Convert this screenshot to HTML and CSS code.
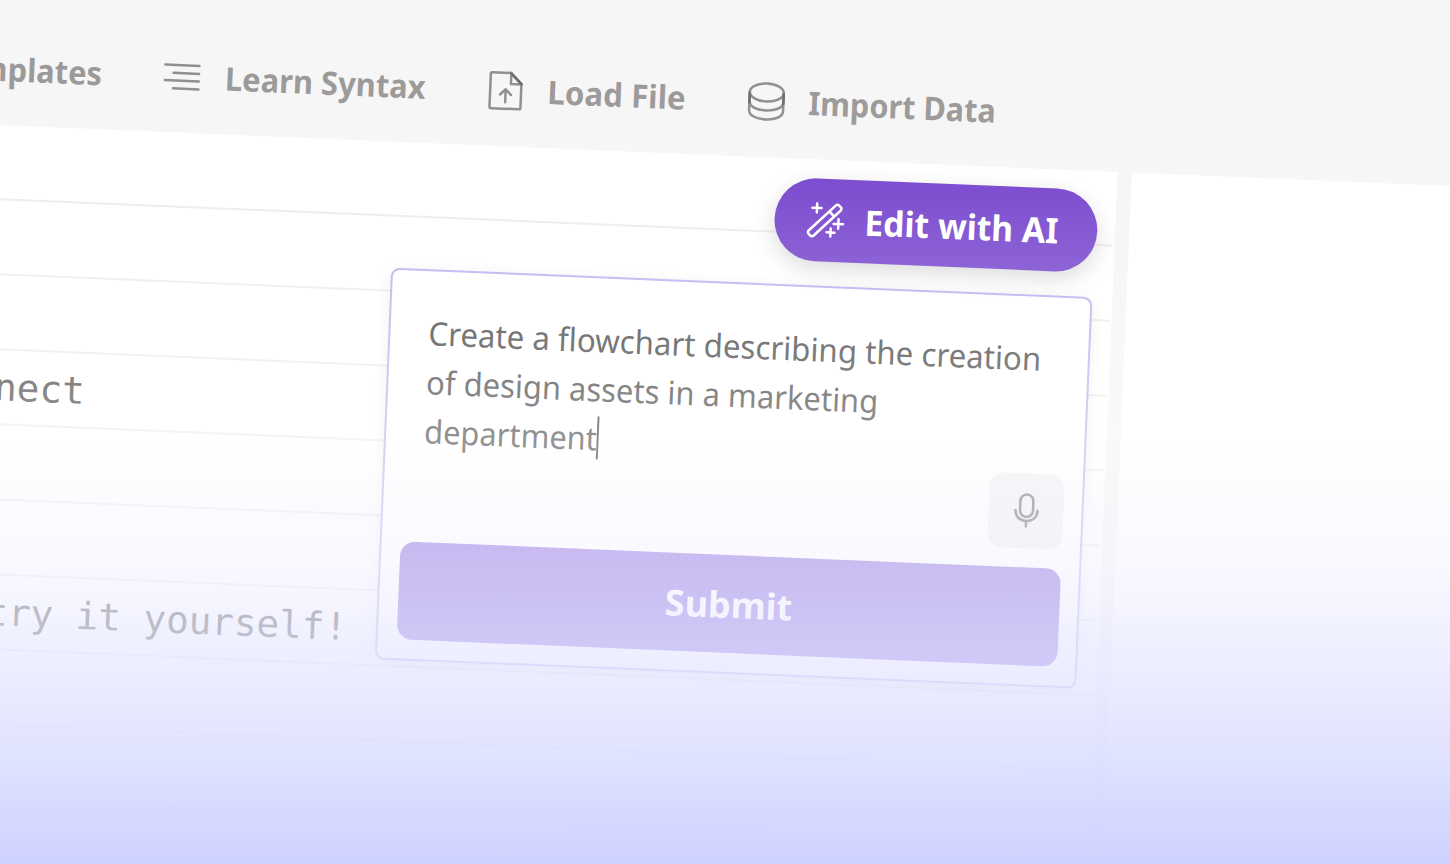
FILE: index.html
```html
<!DOCTYPE html>
<html lang="en">
<head>
<meta charset="utf-8">
<title>Edit with AI</title>
<link rel="stylesheet" href="styles.css">
</head>
<body>
<div class="viewport">
<div class="stage">
  <nav class="toolbar">
    <div class="tool tool-first"><span class="label w-templates">Templates</span></div>
    <div class="tool">
      <svg class="icon" viewBox="0 0 38 38"><path d="M2 7.500H36M10.500 15.500H36M2 23H36M10.500 31H36"/></svg>
      <span class="label w-learn">Learn Syntax</span>
    </div>
    <div class="tool">
      <svg class="icon" viewBox="0 0 38 38"><path d="M6 1.500H25L35.500 12V36Q35.500 37.500 34 37.500H6Q4.500 37.500 4.500 36V3Q4.500 1.500 6 1.500Z"/><path d="M25 1.500V12.500H35.500M20 31V19M14.500 23.500L20 18L25.500 23.500"/><path class="dark" d="M25 2L35.500 12.500"/></svg>
      <span class="label w-load">Load File</span>
    </div>
    <div class="tool">
      <svg class="icon" viewBox="0 0 38 38"><ellipse cx="20" cy="10.300" rx="17" ry="9"/><path d="M3 10.300V28.500C3 40.200 37 40.200 37 28.500V10.300M3 19.500C3 31.200 37 31.200 37 19.500"/><path class="dark" d="M3 11.500V21M37 11.500V21"/></svg>
      <span class="label w-import">Import Data</span>
    </div>
  </nav>
  <main class="workspace">
    <section class="editor">
      <div class="row"></div>
      <div class="row"></div>
      <div class="row"></div>
      <div class="row"><span class="code code-a">Connect</span></div>
      <div class="row"></div>
      <div class="row"></div>
      <div class="row"><span class="code code-b">try it yourself!</span></div>
      <div class="row"></div>
      <div class="row"></div>
      <div class="assistant">
        <div class="pill">
          <svg class="wand" viewBox="0 0 38 38"><path d="M2.800 30.200L28.600 4.400Q30.400 2.600 32.200 4.400L33.600 5.800Q35.400 7.600 33.600 9.400L7.800 35.200Q6 37 4.200 35.200L2.800 33.800Q1 32 2.800 30.200ZM22.500 10.500L27.500 15.500"/><path d="M10 3V12M5.500 7.500H14.500M32 18V27.500M27.200 22.800H36.700M24.500 27.500V35.500M20.500 31.500H28.500"/></svg>
          <span class="pill-text">Edit with AI</span>
        </div>
        <div class="card">
          <div class="prompt">
            <div class="line l1">Create a flowchart describing the creation</div>
            <div class="line l2">of design assets in a marketing</div>
            <div class="line l3">department<span class="caret"></span></div>
          </div>
          <div class="mic">
            <svg viewBox="0 0 26 36"><rect x="6.500" y="2" width="13" height="22.500" rx="6.500"/><path d="M2 18C2 24.500 6.500 28.500 13 28.500S24 24.500 24 18M13 28.500V34"/></svg>
          </div>
          <div class="submit"><span>Submit</span></div>
        </div>
      </div>
    </section>
    <div class="divider"></div>
    <section class="preview"></section>
  </main>
</div>
<div class="fade"></div>
</div>
</body>
</html>
```
FILE: styles.css
```css
body { margin: 0; background: #f5f5f5; font-family: "Noto Sans", "Open Sans", sans-serif; }
.viewport { position: relative; width: 1450px; height: 864px; overflow: hidden; }
.stage { width: 1600px; height: 1100px; margin-top: -100px; transform-origin: 0 100px; transform: rotate(2.4deg); }
.toolbar { box-sizing: border-box; height: 225px; padding-top: 112px; margin-left: -95px; display: flex; align-items: center; gap: 60.500px; background: #f6f6f6; color: #999696; }
.tool { display: flex; align-items: center; gap: 24px; height: 111px; }
.tool-first { width: 200px; justify-content: flex-end; }
.label { font-size: 32.500px; font-weight: 700; white-space: nowrap; transform-origin: 0 50%; }
.w-templates { transform: scaleX(.95); transform-origin: 100% 50%; }
.w-learn { width: 201px; transform: scaleX(.952); }
.w-load { width: 138px; transform: scaleX(.962); }
.w-import { width: 187px; transform: scaleX(.942); }
.icon { width: 38px; height: 38px; fill: none; stroke: #8f8b8b; stroke-width: 2.500; stroke-linecap: round; stroke-linejoin: round; overflow: visible; }
.dark { stroke: #6a6767; }
.workspace { display: flex; height: 875px; }
.editor { position: relative; width: 1124px; background: #fff; }
.row { box-sizing: border-box; width: 1122px; height: 75px; border-bottom: 2.400px solid #ececec; display: flex; align-items: center; }
.code { font-family: "DejaVu Sans Mono", monospace; font-size: 37.600px; line-height: 60px; padding-top: 1px; color: #484848; text-align: right; white-space: nowrap; display: flex; justify-content: flex-end; }
.code-a { width: 101px; }
.code-b { width: 373px; }
.divider { width: 14px; background: #f5f5f5; }
.preview { flex: 1; background: #fff; }
.assistant { position: absolute; top: 19px; right: 20.500px; width: 702px; display: flex; flex-direction: column; align-items: flex-end; gap: 23.500px; isolation: isolate; }
.pill { box-sizing: border-box; width: 323px; height: 83px; margin-right: -2px; border-radius: 42px; padding-left: 32px; display: flex; align-items: center; gap: 20px; background: #7340cc; color: #fff; box-shadow: 0 8px 22px rgba(0, 0, 0, .16); }
.wand { width: 38px; height: 38px; margin-top: -1px; fill: none; stroke: #fff; stroke-width: 2.500; stroke-linecap: round; stroke-linejoin: round; }
.pill-text { font-size: 35px; font-weight: 700; white-space: nowrap; transform: scaleX(.962); transform-origin: 0 50%; }
.card { position: relative; z-index: -1; box-sizing: border-box; width: 100%; height: 392.500px; border: 2.600px solid #b9aef0; border-radius: 9px; padding: 0 17.500px 19px 19px; display: flex; flex-direction: column; background: #fff; box-shadow: 0 3px 14px rgba(0, 0, 0, .08); }
.prompt { padding: 37.500px 0 0 19.500px; height: 139.500px; color: #454545; font-size: 32.500px; }
.line { height: 49.200px; line-height: 49.200px; white-space: nowrap; display: flex; align-items: center; width: max-content; transform-origin: 0 50%; }
.l1 { transform: scaleX(.961); }
.l2 { transform: scaleX(.952); }
.l3 { transform: scaleX(.948); }
.caret { width: 2.200px; height: 43px; margin-left: -0.500px; background: #333; }
.mic { align-self: flex-end; width: 75px; height: 75px; border-radius: 14px; background: #f2eef0; display: flex; align-items: center; justify-content: center; }
.mic svg { width: 26px; height: 36px; margin-top: -1px; fill: none; stroke: #666; stroke-width: 2.600; stroke-linecap: round; }
.submit { margin-top: auto; height: 98px; border-radius: 15px; background: #8360dc; color: #fff; font-size: 36px; font-weight: 700; display: flex; align-items: center; justify-content: center; }
/* Screen-aligned veil that dissolves the tilted scene into lavender */
.fade { position: absolute; inset: 0; background: linear-gradient(to bottom,
  rgba(255,255,255,0) 0, rgba(255,255,255,.08) 190px, rgba(255,255,255,.18) 265px,
  rgba(255,255,255,.27) 340px, rgba(255,255,255,.42) 440px, rgba(249,249,255,.53) 500px,
  rgba(245,245,255,.62) 560px, rgba(240,241,255,.67) 600px, rgba(234,235,255,.74) 640px,
  rgba(228,229,255,.82) 700px, rgba(219,222,255,.88) 760px, rgba(206,210,255,1) 864px); }
```
